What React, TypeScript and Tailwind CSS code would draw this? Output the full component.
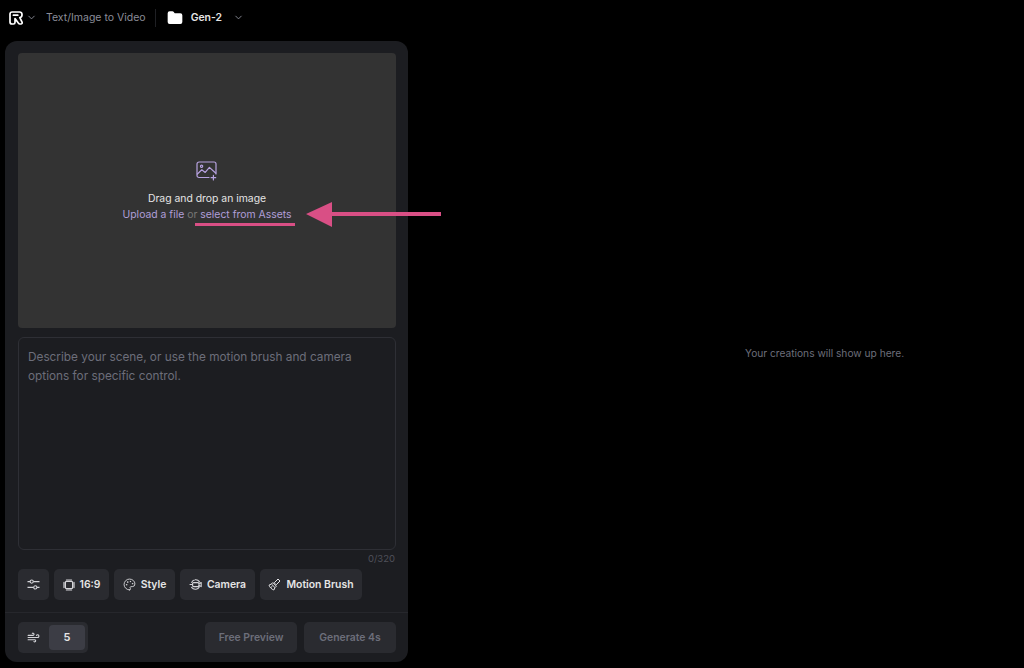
import { ChevronDown, Folder, Palette, Wind } from "lucide-react"

const font = { fontFamily: "Inter, sans-serif" }

const RunwayLogo = () => (
	<svg width="14" height="14" viewBox="0 0 14 14" fill="none" stroke="#fff" strokeWidth="1.7" strokeLinejoin="round" strokeLinecap="round">
		<path d="M3 1h7.6A2.4 2.4 0 0 1 13 3.4v.6a2.6 2.6 0 0 1-2.2 2.6L13 11a1.3 1.3 0 0 1-1.1 2h-1.1a1.6 1.6 0 0 1-1.3-.7L6 7.6V11.4A1.6 1.6 0 0 1 4.4 13H3a2 2 0 0 1-2-2V3a2 2 0 0 1 2-2Z" />
		<path d="M4.4 4.2h4.4" />
	</svg>
)

const ImageAddIcon = () => (
	<svg width="22" height="20" viewBox="0 0 22 20" fill="none" stroke="#b7a2e0" strokeWidth="1.2" strokeLinecap="round" strokeLinejoin="round">
		<path d="M13 16.5H3a2 2 0 0 1-2-2V3a2 2 0 0 1 2-2h15a2 2 0 0 1 2 2v10" />
		<circle cx="5.6" cy="5.2" r="1.1" />
		<path d="m1.4 13 4.4-4.2 3.4 2.6 4.2-5 6.2 5.6" />
		<path d="M17.4 14.4v4.6M15.1 16.7h4.6" />
	</svg>
)

const SlidersIcon = () => (
	<svg width="13" height="11" viewBox="0 0 13 11" fill="none" stroke="#d4d4d8" strokeWidth="1.1">
		<path d="M.5 2.6h2.6M6.4 2.6h6.1M.5 8.4h6.1M10 8.4h2.5" />
		<circle cx="4.7" cy="2.6" r="1.6" />
		<circle cx="8.3" cy="8.4" r="1.6" />
	</svg>
)

const AspectIcon = () => (
	<svg width="12" height="12" viewBox="0 0 12 12" fill="none" stroke="#d4d4d8" strokeWidth="1.2">
		<rect x="2.4" y="2.4" width="7.2" height="7.2" rx="1" />
		<path d="M3.4 1h5.2M3.4 11h5.2M1 3.4v5.2M11 3.4v5.2" strokeLinecap="round" />
	</svg>
)

const CameraIcon = () => (
	<svg width="13" height="13" viewBox="0 0 13 13" fill="none" stroke="#d4d4d8" strokeWidth="1.1" strokeLinecap="round" strokeLinejoin="round">
		<path d="M10.4 3.6A4.6 4.6 0 0 0 6 1.8a4 4 0 0 0-3.3 2.6" />
		<path d="M2.6 9.4A4.6 4.6 0 0 0 7 11.2a4 4 0 0 0 3.4-2.4" />
		<rect x="3.6" y="4.6" width="6.4" height="4" rx="1" />
		<path d="M10 5.6 12.2 4.6V8.6L10 7.6M1 6.5h2.6" />
	</svg>
)

const BrushIcon = () => (
	<svg width="13" height="13" viewBox="0 0 13 13" fill="none" stroke="#e4e4e7" strokeWidth="1" strokeLinejoin="round">
		<path d="M6.2 4.8 10 1l2 2-3.8 3.8Z" />
		<path d="M4.8 4.6 8.4 8.2 7 9.6 3.4 6Z" />
		<path d="M3.4 6 1 7.2c.6 2 2.8 4.2 4.8 4.8L7 9.6M3 9.4l1.4-1.2" />
	</svg>
)

const tools = [
	{ label: "16:9", icon: <AspectIcon />, width: "w-[55px]" },
	{ label: "Style", icon: <Palette size={13} color="#d4d4d8" strokeWidth={1.7} />, width: "w-[61px]" },
	{ label: "Camera", icon: <CameraIcon />, width: "w-[75px]" },
	{ label: "Motion Brush", icon: <BrushIcon />, width: "w-[102px]" },
]

export default function App() {
	return (
		<div className="relative h-[668px] w-[1024px] overflow-hidden bg-black" style={font}>
			<header className="flex h-[41px] items-center pb-[7px] pl-[9px] pt-px">
				<RunwayLogo />
				<ChevronDown size={11} color="#8b8d98" className="ml-[3px]" />
				<span className="ml-[9px] text-[10.5px] text-[#8b8d98]">Text/Image to Video</span>
				<div className="ml-[9px] h-[18px] w-px bg-[#1f2024]" />
				<Folder size={16} fill="#fff" color="#fff" className="ml-[11px]" />
				<span className="ml-[8px] text-[10.4px] font-semibold text-[#e5e5e5]">Gen-2</span>
				<ChevronDown size={11} color="#8b8d98" className="ml-[11px]" />
			</header>

			<main className="ml-[5px] flex h-[621px] w-[403px] flex-col rounded-xl bg-[#1c1d21]">
				<div className="pl-[13px] pr-[12px] pt-3">
					<div className="flex h-[275px] flex-col items-center rounded-[4px] bg-[#333333] pt-[108px]">
						<ImageAddIcon />
						<p className="mt-[10px] text-[10.4px] leading-4 text-[#e5e5e5]">Drag and drop an image</p>
						<p className="text-[10.4px] leading-4 text-[#b09fd9]">
							Upload a file <span className="text-[#777]">or</span> select from Assets
						</p>
					</div>
					<div className="mt-[9px] h-[213px] rounded-md border border-[#2e2f35] px-[9px] py-[10px] text-[11.8px] leading-[19px] text-[#6c6e7a]">
						Describe your scene, or use the motion brush and camera options for specific control.
					</div>
					<p className="mt-[3px] pr-px text-right text-[9.5px] leading-[12px] text-[#4f5059]">0/320</p>
					<div className="mt-1 flex gap-[5px]">
						<button className="flex h-[31px] w-[31px] items-center justify-center rounded-[5px] bg-[#2a2b30]">
							<SlidersIcon />
						</button>
						{tools.map((tool) => (
							<button key={tool.label} className={`flex h-[31px] items-center justify-center gap-[5px] rounded-[5px] bg-[#2a2b30] text-[10.4px] font-semibold text-[#e5e5e5] ${tool.width}`}>
								{tool.icon}
								{tool.label}
							</button>
						))}
					</div>
				</div>
				<div className="mt-[12px] flex items-center justify-between border-t border-[#26272c] pl-[13px] pr-[12px] pt-[9px]">
					<div className="flex h-[31px] w-[70px] items-center rounded-[5px] bg-[#2a2b30] pl-[9px]">
						<Wind size={13} color="#d4d4d8" />
						<span className="ml-[9px] flex h-[25px] w-[36px] items-center justify-center rounded-[4px] bg-[#3c3d45] text-[11px] font-semibold text-[#e5e5e5]">5</span>
					</div>
					<div className="flex gap-[7px]">
						<button className="h-[31px] w-[92px] rounded-[5px] bg-[#2a2b30] text-[10.4px] font-semibold text-[#6c6e7a]">Free Preview</button>
						<button className="h-[31px] w-[92px] rounded-[5px] bg-[#2a2b30] text-[10.4px] font-semibold text-[#6c6e7a]">Generate 4s</button>
					</div>
				</div>
			</main>

			<p className="absolute left-[745px] top-[346px] text-[10.2px] leading-[14px] text-[#6c6e7a]">Your creations will show up here.</p>

			{/* annotation drawn over the screenshot */}
			<div className="absolute left-[195px] top-[223px] h-[3px] w-[100px] bg-[#d94f85]" />
			<svg className="absolute left-[300px] top-[200px]" width="145" height="30" viewBox="0 0 145 30">
				<path d="M6 14 32 2v10h109v4H32v11Z" fill="#d94f85" />
			</svg>
		</div>
	)
}
